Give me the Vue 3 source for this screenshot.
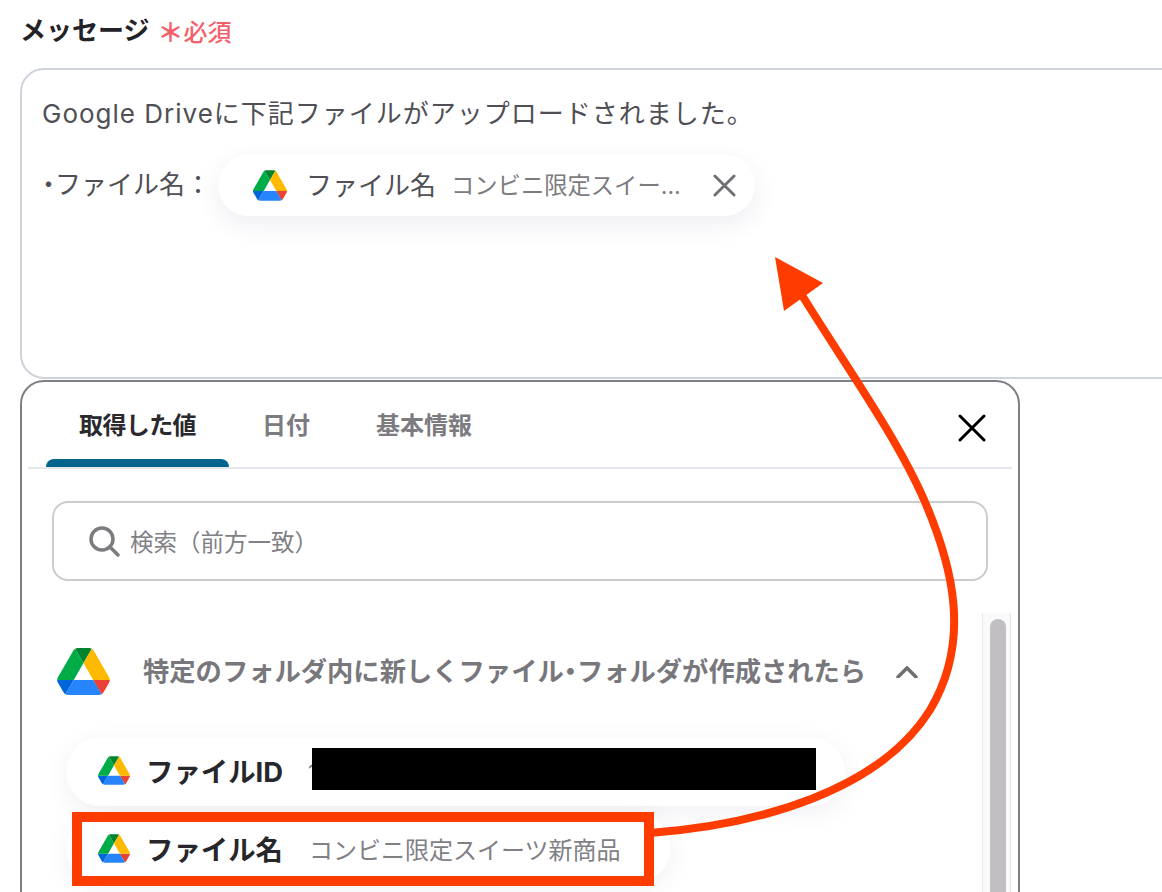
<script setup>
const tabs = [
  { label: "取得した値", active: true },
  { label: "日付", active: false },
  { label: "基本情報", active: false },
];
</script>

<template>
  <div class="page">
    <!-- Driveアイコン -->
    <svg class="defs" width="0" height="0">
      <symbol id="drive" viewBox="0 0 87.3 78">
        <path d="m6.6 66.85 3.85 6.65c.8 1.4 1.95 2.5 3.3 3.3l13.75-23.8h-27.5c0 1.55.4 3.1 1.2 4.5z" fill="#0066da" />
        <path d="m43.65 25-13.75-23.8c-1.35.8-2.5 1.9-3.3 3.3l-25.4 44a9.06 9.06 0 0 0 -1.2 4.5h27.5z" fill="#00ac47" />
        <path d="m73.55 76.8c1.35-.8 2.5-1.9 3.3-3.3l1.6-2.75 7.65-13.25c.8-1.4 1.2-2.95 1.2-4.5h-27.502l5.852 11.5z" fill="#ea4335" />
        <path d="m43.65 25 13.75-23.8c-1.35-.8-2.9-1.2-4.5-1.2h-18.5c-1.6 0-3.15.45-4.5 1.2z" fill="#00832d" />
        <path d="m59.8 53h-32.3l-13.75 23.8c1.35.8 2.9 1.2 4.5 1.2h50.8c1.6 0 3.15-.45 4.5-1.2z" fill="#2684fc" />
        <path d="m73.4 26.5-12.7-22c-.8-1.4-1.95-2.5-3.3-3.3l-13.75 23.8 16.15 28h27.45c0-1.55-.4-3.1-1.2-4.5z" fill="#ffba00" />
      </symbol>
    </svg>

    <div class="label-row">
      <span class="label">メッセージ</span>
      <span class="required"><span class="star">＊</span>必須</span>
    </div>

    <div class="message-box">
      <p class="line">Google Driveに下記ファイルがアップロードされました。</p>
      <div class="line chip-line">
        <span class="chip-label"><span class="narrow-dot">・</span>ファイル名：</span>
        <span class="chip">
          <svg class="chip-icon"><use href="#drive" /></svg>
          <span class="chip-name">ファイル名</span>
          <span class="chip-value">コンビニ限定スイー...</span>
          <svg class="chip-close" viewBox="0 0 24 24">
            <path d="M2 2 22 22M22 2 2 22" />
          </svg>
        </span>
      </div>
    </div>

    <div class="panel">
      <div class="tabs">
        <div v-for="tab in tabs" :key="tab.label" class="tab" :class="{ active: tab.active }">
          {{ tab.label }}
        </div>
        <svg class="panel-close" viewBox="0 0 28 28">
          <path d="M2 2 26 26M26 2 2 26" />
        </svg>
      </div>

      <div class="search">
        <svg class="search-icon" viewBox="0 0 32 32">
          <circle cx="14" cy="14" r="11" />
          <path d="M22 22 30 30" />
        </svg>
        <span>検索（前方一致）</span>
      </div>

      <div class="list-area">
        <div class="list">
          <div class="group-head">
            <svg class="group-icon"><use href="#drive" /></svg>
            <span class="group-title">特定のフォルダ内に新しくファイル<span class="narrow-dot">・</span>フォルダが作成されたら</span>
            <svg class="chevron" viewBox="0 0 22 12">
              <path d="M2 11 11 2 20 11" />
            </svg>
          </div>

          <div class="pill first">
            <svg class="pill-icon"><use href="#drive" /></svg>
            <span class="pill-name">ファイルID</span>
            <span class="id-start">1</span>
            <span class="redacted"></span>
          </div>
          <div class="pill">
            <svg class="pill-icon"><use href="#drive" /></svg>
            <span class="pill-name">ファイル名</span>
            <span class="pill-value">コンビニ限定スイーツ新商品</span>
          </div>
        </div>
        <div class="scroll-track"><div class="scroll-thumb"></div></div>
      </div>
    </div>

    <!-- 赤い注釈 -->
    <div class="red-box"></div>
    <svg class="arrow" viewBox="0 0 1162 892" width="1162" height="892">
      <path class="arrow-line" d="M650 833 C 760 825, 880 790, 930 710 C 972 640, 952 565, 925 502 C 897 437, 845 365, 800 292" />
      <path class="arrow-head" d="M775 257 823 283 784 311Z" />
    </svg>
  </div>
</template>

<style scoped>
.page {
  position: relative;
  width: 1162px;
  height: 892px;
  overflow: hidden;
  box-sizing: border-box;
  padding: 15px 0 0 20px;
  background: #fff;
  font-family: Inter, "Noto Sans CJK JP", sans-serif;
  color: #4f4f55;
}

.defs {
  position: absolute;
}

.label-row {
  display: flex;
  align-items: center;
  height: 30px;
  margin-bottom: 23px;
}

.label {
  padding-bottom: 3px;
  font-size: 26px;
  font-weight: 700;
  color: #222227;
}

.required {
  display: flex;
  align-items: center;
  margin-left: 8px;
  font-size: 24px;
  font-weight: 500;
  color: #f4606c;
}

.star {
  width: 26px;
  font-size: 26px;
  font-weight: 700;
}

.message-box {
  box-sizing: border-box;
  width: 1200px;
  height: 311px;
  padding: 25px 20px;
  background: #fff;
  border: 2px solid #cfd3dc;
  border-radius: 24px;
}

.line {
  margin: 0;
  font-size: 26px;
  line-height: 38px;
  letter-spacing: 1px;
}

.chip-line {
  display: flex;
  align-items: center;
  margin-top: 22px;
  letter-spacing: 0;
}

.chip-label {
  width: 176px;
  flex-shrink: 0;
  padding-bottom: 2px;
}

.narrow-dot {
  font-feature-settings: "palt";
}

.chip {
  display: flex;
  align-items: center;
  box-sizing: border-box;
  width: 537px;
  height: 61px;
  padding: 0 19px 0 35px;
  border-radius: 31px;
  background: #fff;
  box-shadow: 0 8px 24px rgba(70, 60, 110, 0.09);
}

.chip-icon {
  width: 34px;
  height: 31px;
}

.chip-name {
  margin-left: 19px;
}

.chip-value {
  margin-left: 15px;
  font-size: 23.3px;
  color: #7b7b80;
  white-space: nowrap;
}

.chip-close {
  width: 23px;
  height: 23px;
  margin-left: auto;
  fill: none;
  stroke: #6f6f74;
  stroke-width: 3;
  stroke-linecap: round;
}

.panel {
  box-sizing: border-box;
  width: 1000px;
  height: 560px;
  margin-top: 1px;
  background: #fff;
  border: 2px solid #7f7f85;
  border-radius: 24px;
}

.tabs {
  position: relative;
  display: flex;
  height: 85px;
  margin: 0 6px;
  padding-left: 18px;
  border-bottom: 2px solid #e6e6ec;
}

.tab {
  position: relative;
  box-sizing: border-box;
  height: 85px;
  padding: 26px 33px 0;
  font-size: 24px;
  line-height: 36px;
  font-weight: 700;
  color: #7b7b80;
  white-space: nowrap;
}

.tab.active {
  color: #2a2a2e;
  letter-spacing: -0.6px;
}

.tab.active::after {
  content: "";
  position: absolute;
  left: 0;
  right: 0;
  bottom: 0;
  height: 8px;
  background: #04648c;
  border-radius: 8px 8px 0 0;
}

.panel-close {
  position: absolute;
  top: 32px;
  right: 26px;
  width: 28px;
  height: 28px;
  fill: none;
  stroke: #000;
  stroke-width: 3;
  stroke-linecap: round;
}

.search {
  display: flex;
  align-items: center;
  box-sizing: border-box;
  width: 936px;
  height: 80px;
  margin: 32px 0 0 30px;
  padding-left: 34px;
  border: 2px solid #cbcbd0;
  border-radius: 16px;
  font-size: 23.5px;
  color: #808085;
}

.search-icon {
  width: 32px;
  height: 32px;
  margin-right: 10px;
  fill: none;
  stroke: #7b7b80;
  stroke-width: 3.5;
  stroke-linecap: round;
}

.list-area {
  display: flex;
  justify-content: space-between;
  margin-top: 32px;
}

.list {
  padding: 35px 0 0 35px;
}

.group-head {
  display: flex;
  align-items: center;
  height: 47px;
}

.group-icon {
  width: 53px;
  height: 47px;
}

.group-title {
  margin-left: 33px;
  padding-bottom: 4px;
  font-size: 26.3px;
  font-weight: 700;
  color: #77777c;
  white-space: nowrap;
}

.chevron {
  width: 22px;
  height: 12px;
  margin-left: 30px;
  fill: none;
  stroke: #6e6e73;
  stroke-width: 3.5;
  stroke-linecap: round;
}

.pill {
  display: inline-flex;
  align-items: center;
  box-sizing: border-box;
  height: 68px;
  margin: 8px 0 0 9px;
  padding: 0 50px 0 32px;
  border-radius: 34px;
  background: #fff;
  box-shadow: 0 6px 24px rgba(70, 60, 110, 0.08);
}

.pill.first {
  display: flex;
  width: 779px;
  margin-top: 43px;
  padding-right: 0;
}

.pill-icon {
  width: 32px;
  height: 29px;
  flex-shrink: 0;
}

.pill.first .pill-icon {
  margin-bottom: 4px;
}

.pill-name {
  margin-left: 16px;
  font-size: 27.4px;
  font-weight: 700;
  color: #26262b;
  white-space: nowrap;
}

.pill.first .pill-name {
  padding-bottom: 4px;
}

.pill-value {
  margin-left: 26px;
  font-size: 24px;
  color: #808085;
  white-space: nowrap;
}

.id-start {
  flex-shrink: 0;
  width: 4px;
  margin-left: 25px;
  overflow: hidden;
  font-size: 22px;
  color: #808085;
}

.redacted {
  flex-shrink: 0;
  width: 504px;
  height: 42px;
  margin-bottom: 6px;
  background: #000;
}

.scroll-track {
  box-sizing: border-box;
  width: 29px;
  height: 400px;
  margin-right: 7px;
  padding: 6px 5px 0 7px;
  background: #fafafb;
  border-left: 1px solid #e6e6ea;
  border-right: 1px solid #e6e6ea;
}

.scroll-thumb {
  width: 16px;
  height: 400px;
  border-radius: 8px;
  background: #c1bfc3;
}

.red-box {
  position: absolute;
  left: 72px;
  top: 812px;
  width: 582px;
  height: 74px;
  box-sizing: border-box;
  border: 10px solid #ff3c00;
}

.arrow {
  position: absolute;
  left: 0;
  top: 0;
  pointer-events: none;
}

.arrow-line {
  fill: none;
  stroke: #ff3c00;
  stroke-width: 8;
}

.arrow-head {
  fill: #ff3c00;
}
</style>
